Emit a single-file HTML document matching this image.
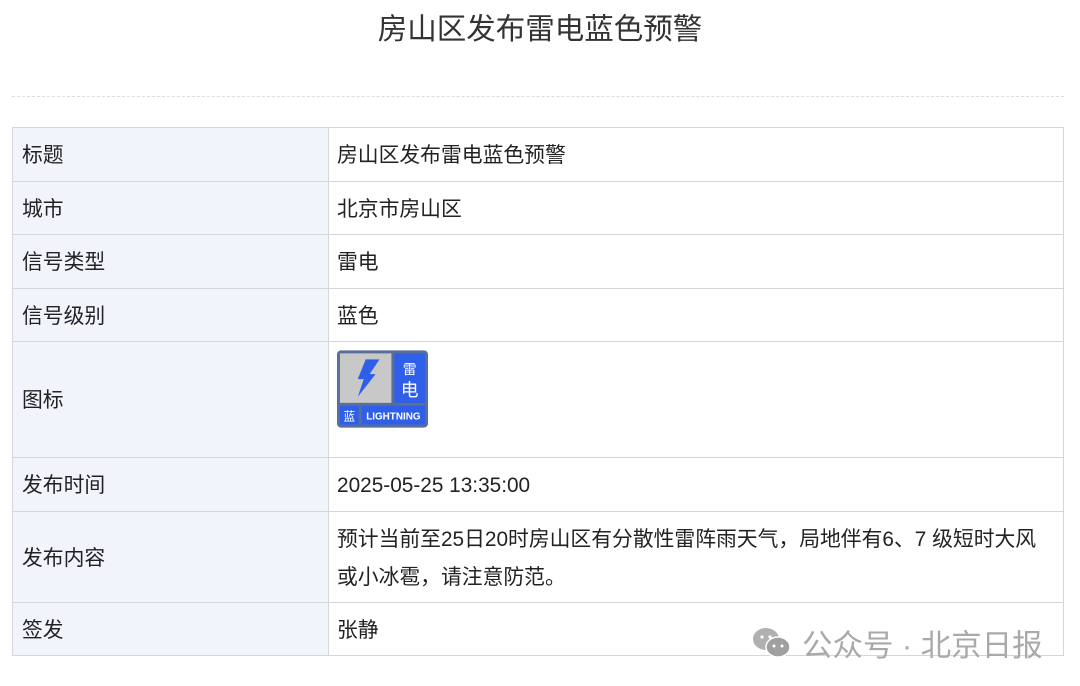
<!DOCTYPE html>
<html><head><meta charset="utf-8"><style>
body{margin:0;width:1080px;height:686px;background:#fff;font-family:"Liberation Sans","Noto Sans CJK SC",sans-serif;color:#222;position:relative;overflow:hidden}
h1{position:absolute;top:12px;left:0;width:1080px;text-align:center;margin:0;font-size:29.5px;font-weight:normal;color:#333;line-height:36px}
.dash{position:absolute;top:96px;left:12px;width:1052px;border-top:1px dashed #ddd}
table{position:absolute;top:127px;left:12px;width:1052px;border-collapse:collapse;font-size:20.8px}
td{border:1px solid #d4d6da;padding:3px 9px 0;vertical-align:middle;line-height:36px}
td.l{background:#f1f4fb;width:297px}
td.v{padding-left:8px}
.wm{position:absolute;left:752px;top:621px;font-size:30.5px;color:#a9a9a9;display:flex;align-items:center;gap:10px}
</style></head><body>
<h1>房山区发布雷电蓝色预警</h1>
<div class="dash"></div>
<table>
<tr style="height:54px"><td class="l">标题</td><td class="v">房山区发布雷电蓝色预警</td></tr>
<tr style="height:53px"><td class="l">城市</td><td class="v">北京市房山区</td></tr>
<tr style="height:54px"><td class="l">信号类型</td><td class="v">雷电</td></tr>
<tr style="height:53px"><td class="l">信号级别</td><td class="v">蓝色</td></tr>
<tr style="height:116px"><td class="l">图标</td><td class="v" style="vertical-align:top;padding-top:7px;padding-left:7px;line-height:0">
<svg width="93" height="80" viewBox="0 0 94 80">
<rect x="1" y="1" width="92" height="78" rx="4" fill="#5a6e9a"/>
<rect x="4" y="4" width="52" height="50" fill="#c8c8c8"/>
<path d="M30 10 L44 10 L34 25 L40 25 L22 48 L28 30 L22 30 Z" fill="#2f5ee8"/>
<rect x="59" y="4" width="31" height="50" fill="#2f5ee8"/>
<text x="74.5" y="25" font-size="14" fill="#fff" text-anchor="middle" font-family="Noto Sans CJK SC">雷</text>
<text x="74.5" y="47" font-size="18" fill="#fff" text-anchor="middle" font-family="Noto Sans CJK SC">电</text>
<rect x="4" y="57" width="19" height="19" fill="#2f5ee8"/>
<text x="13.5" y="72" font-size="12" fill="#fff" text-anchor="middle" font-family="Noto Sans CJK SC">蓝</text>
<rect x="26" y="57" width="64" height="19" fill="#2f5ee8"/>
<text x="58" y="71" font-size="10" fill="#fff" text-anchor="middle" font-weight="bold">LIGHTNING</text>
</svg></td></tr>
<tr style="height:54px"><td class="l">发布时间</td><td class="v">2025-05-25 13:35:00</td></tr>
<tr style="height:91px"><td class="l">发布内容</td><td class="v" style="line-height:38px">预计当前至25日20时房山区有分散性雷阵雨天气，局地伴有6、7 级短时大风<br>或小冰雹，请注意防范。</td></tr>
<tr style="height:53px"><td class="l">签发</td><td class="v">张静</td></tr>
</table>
<div class="wm"><svg width="40" height="34" viewBox="0 0 40 34"><ellipse cx="14" cy="13" rx="13" ry="11" fill="#b0b0b0"/><ellipse cx="26" cy="21" rx="12" ry="10" fill="#a0a0a0" stroke="#fff" stroke-width="1.5"/><circle cx="10" cy="11" r="1.6" fill="#fff"/><circle cx="18" cy="11" r="1.6" fill="#fff"/><circle cx="22" cy="20" r="1.5" fill="#fff"/><circle cx="30" cy="20" r="1.5" fill="#fff"/></svg><span>公众号 · 北京日报</span></div>
</body></html>
